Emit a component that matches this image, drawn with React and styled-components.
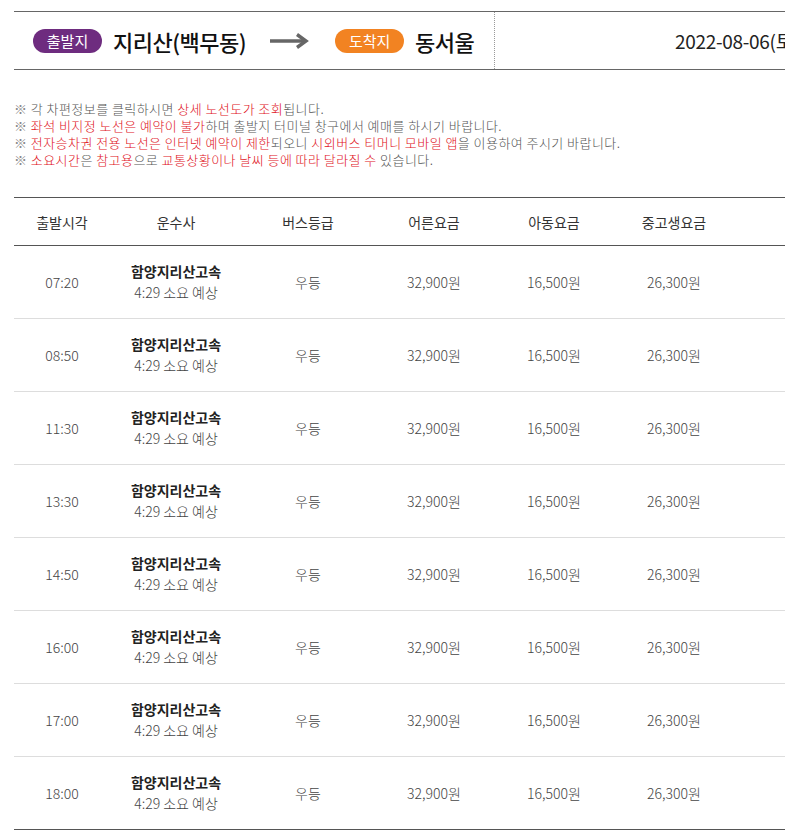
import React from "react";
import styled, { createGlobalStyle } from "styled-components";

const GlobalStyle = createGlobalStyle`
  html, body {
    margin: 0;
    padding: 0;
    background: #fff;
    overflow: hidden;
  }
  body {
    font-family: "Noto Sans CJK KR", "Noto Sans", sans-serif;
    color: #333;
  }
`;

const times = ["07:20", "08:50", "11:30", "13:30", "14:50", "16:00", "17:00", "18:00"];

const App = () => {
  return (
    <>
      <GlobalStyle />
      <Page>
        <RouteBar>
          <RouteInfo>
            <Badge $color="#6e2c7f">출발지</Badge>
            <Place>지리산(백무동)</Place>
            <Arrow width="42" height="16" viewBox="0 0 42 16">
              <path d="M1 8 H36" stroke="#666" strokeWidth="3.4" />
              <path d="M28 1.5 L37 8 L28 14.5" stroke="#666" strokeWidth="3.4" fill="none" />
            </Arrow>
            <Badge $color="#f28322">도착지</Badge>
            <Place>동서울</Place>
          </RouteInfo>
          <DateCell>2022-08-06(토)</DateCell>
        </RouteBar>

        <Notes>
          <li>
            각 차편정보를 클릭하시면 <Red>상세 노선도가 조회</Red>됩니다.
          </li>
          <li>
            <Red>좌석 비지정 노선은 예약이 불가</Red>하며 출발지 터미널 창구에서 예매를 하시기 바랍니다.
          </li>
          <li>
            <Red>전자승차권 전용 노선은 인터넷 예약이 제한</Red>되오니 <Red>시외버스 티머니 모바일 앱</Red>을 이용하여 주시기 바랍니다.
          </li>
          <li>
            <Red>소요시간</Red>은 <Red>참고용</Red>으로 <Red>교통상황이나 날씨 등에 따라 달라질 수</Red> 있습니다.
          </li>
        </Notes>

        <Table>
          <HeadRow>
            <Cell $w={96}>출발시각</Cell>
            <Cell $w={132}>운수사</Cell>
            <Cell $w={132}>버스등급</Cell>
            <Cell $w={120}>어른요금</Cell>
            <Cell $w={120}>아동요금</Cell>
            <Cell $w={120}>중고생요금</Cell>
            <Cell $w={200}></Cell>
          </HeadRow>
          {times.map((t, i) => (
            <Row key={t} $last={i === times.length - 1}>
              <Cell $w={96}>{t}</Cell>
              <Cell $w={132}>
                <Company>
                  <strong>함양지리산고속</strong>
                  <span>4:29 소요 예상</span>
                </Company>
              </Cell>
              <Cell $w={132}>우등</Cell>
              <Cell $w={120}>32,900원</Cell>
              <Cell $w={120}>16,500원</Cell>
              <Cell $w={120}>26,300원</Cell>
              <Cell $w={200}></Cell>
            </Row>
          ))}
        </Table>
      </Page>
    </>
  );
};

export default App;

const Page = styled.div`
  width: 1000px;
  padding: 11px 0 0 14px;
`;

const RouteBar = styled.div`
  display: flex;
  height: 57px;
  border-top: 1px solid #666;
  border-bottom: 1px solid #666;
`;

const RouteInfo = styled.div`
  display: flex;
  align-items: center;
  width: 481px;
  padding-left: 19px;
  box-sizing: border-box;
  border-right: 1px dotted #999;
`;

const Badge = styled.span`
  display: inline-flex;
  align-items: center;
  justify-content: center;
  width: 69px;
  height: 24px;
  border-radius: 12px;
  background: ${(p) => p.$color};
  color: #fff;
  font-size: 15px;
  margin-right: 11px;
`;

const Place = styled.span`
  font-size: 22px;
  font-weight: 500;
  color: #111;
  letter-spacing: -0.5px;
`;

const Arrow = styled.svg`
  margin: 0 24px 0 23px;
`;

const DateCell = styled.div`
  display: flex;
  align-items: center;
  padding-left: 180px;
  font-size: 19px;
  color: #222;
  letter-spacing: -0.3px;
`;

const Notes = styled.ul`
  list-style: none;
  margin: 30px 0 0;
  padding: 0;
  font-size: 13px;
  font-weight: 300;
  line-height: 17px;
  color: #555;
  letter-spacing: 0.45px;

  li {
    height: 17px;
  }

  li::before {
    content: "※ ";
    color: #888;
  }
`;

const Red = styled.span`
  color: #e0101a;
`;

const Table = styled.div`
  margin-top: 29px;
  border-top: 1px solid #555;
`;

const HeadRow = styled.div`
  display: flex;
  height: 47px;
  align-items: center;
  border-bottom: 1px solid #555;
  font-size: 14px;
  color: #333;
`;

const Row = styled.div`
  display: flex;
  height: 72px;
  align-items: center;
  border-bottom: 1px solid ${(p) => (p.$last ? "#555" : "#ddd")};
  font-size: 14px;
  font-weight: 300;
  color: #444;
`;

const Cell = styled.div`
  flex: 0 0 ${(p) => p.$w}px;
  text-align: center;
`;

const Company = styled.div`
  display: flex;
  flex-direction: column;
  line-height: 21px;

  strong {
    font-weight: 700;
    color: #222;
  }
`;
